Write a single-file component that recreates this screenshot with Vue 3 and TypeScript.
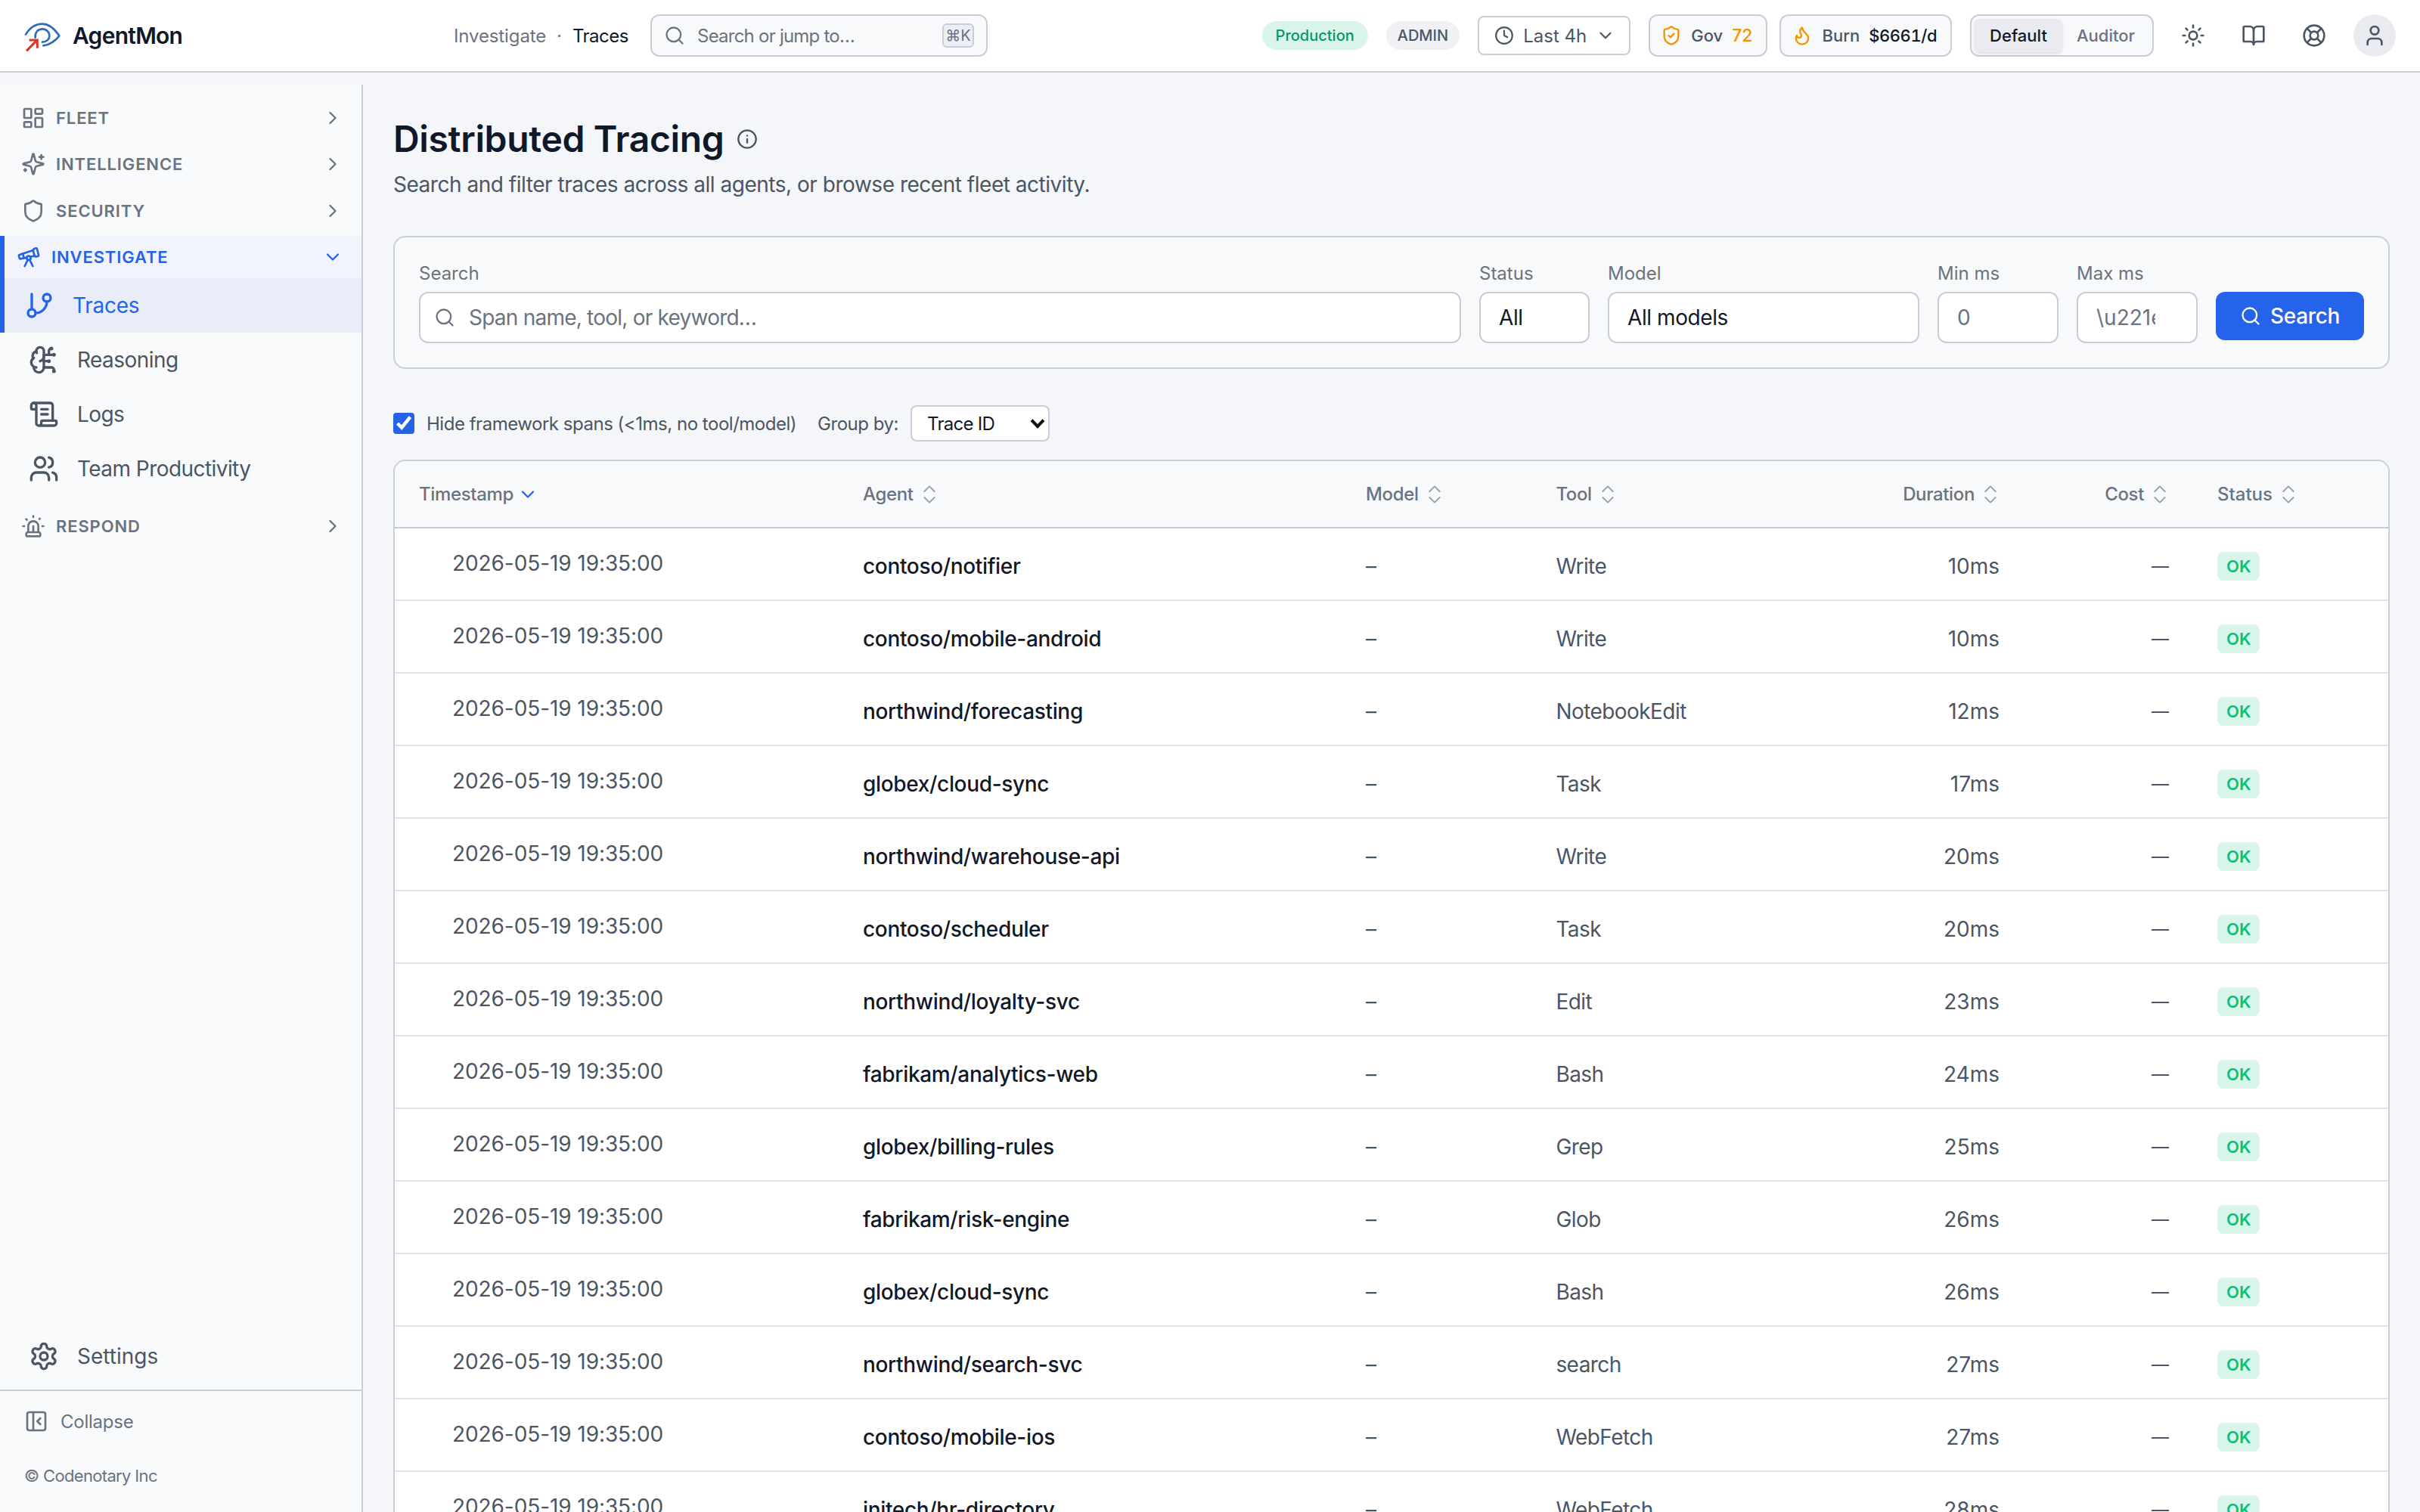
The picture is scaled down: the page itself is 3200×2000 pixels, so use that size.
<script setup lang="ts">
import { h } from 'vue'

// lucide-style icon bodies, keyed by name
const ICONS: Record<string, string> = {
  dashboard: '<rect x="3" y="3" width="7" height="9" rx="1"/><rect x="14" y="3" width="7" height="5" rx="1"/><rect x="14" y="12" width="7" height="9" rx="1"/><rect x="3" y="16" width="7" height="5" rx="1"/>',
  sparkles: '<path d="M9.937 15.5A2 2 0 0 0 8.5 14.063l-6.135-1.582a.5.5 0 0 1 0-.962L8.5 9.936A2 2 0 0 0 9.937 8.5l1.582-6.135a.5.5 0 0 1 .963 0L14.063 8.5A2 2 0 0 0 15.5 9.937l6.135 1.581a.5.5 0 0 1 0 .964L15.5 14.063a2 2 0 0 0-1.437 1.437l-1.582 6.135a.5.5 0 0 1-.963 0z"/><path d="M20 3v4"/><path d="M22 5h-4"/><path d="M4 17v2"/><path d="M5 18H3"/>',
  shield: '<path d="M20 13c0 5-3.5 7.5-7.66 8.95a1 1 0 0 1-.67-.01C7.5 20.5 4 18 4 13V6a1 1 0 0 1 1-1c2 0 4.5-1.2 6.24-2.72a1.17 1.17 0 0 1 1.52 0C14.51 3.81 17 5 19 5a1 1 0 0 1 1 1z"/>',
  shieldCheck: '<path d="M20 13c0 5-3.5 7.5-7.66 8.95a1 1 0 0 1-.67-.01C7.5 20.5 4 18 4 13V6a1 1 0 0 1 1-1c2 0 4.5-1.2 6.24-2.72a1.17 1.17 0 0 1 1.52 0C14.51 3.81 17 5 19 5a1 1 0 0 1 1 1z"/><path d="m9 12 2 2 4-4"/>',
  telescope: '<path d="m10.065 12.493-6.18 1.318a.934.934 0 0 1-1.108-.702l-.537-2.15a1.07 1.07 0 0 1 .691-1.265l13.504-4.44"/><path d="m13.56 11.747 4.332-.924"/><path d="m16 21-3.105-6.21"/><path d="M16.485 5.94a2 2 0 0 1 1.455-2.425l1.09-.272a1 1 0 0 1 1.212.727l1.515 6.06a1 1 0 0 1-.727 1.213l-1.09.272a2 2 0 0 1-2.425-1.455z"/><path d="m6.158 8.633 1.114 4.456"/><path d="m8 21 3.105-6.21"/><circle cx="12" cy="13" r="2"/>',
  branch: '<line x1="6" x2="6" y1="3" y2="15"/><circle cx="18" cy="6" r="3"/><circle cx="6" cy="18" r="3"/><path d="M18 9a9 9 0 0 1-9 9"/>',
  brain: '<path d="M12 5a3 3 0 1 0-5.997.125 4 4 0 0 0-2.526 5.77 4 4 0 0 0 .556 6.588A4 4 0 1 0 12 18Z"/><path d="M9 13a4.5 4.5 0 0 0 3-4"/><path d="M6.003 5.125A3 3 0 0 0 6.401 6.5"/><path d="M3.477 10.896a4 4 0 0 1 .585-.396"/><path d="M6 18a4 4 0 0 1-1.967-.516"/><path d="M12 13h4"/><path d="M12 18h6a2 2 0 0 1 2 2v1"/><path d="M12 8h8"/><path d="M16 8V5a2 2 0 0 1 2-2"/><circle cx="16" cy="13" r=".5"/><circle cx="18" cy="3" r=".5"/><circle cx="20" cy="21" r=".5"/><circle cx="20" cy="8" r=".5"/>',
  scroll: '<path d="M15 12h-5"/><path d="M15 8h-5"/><path d="M19 17V5a2 2 0 0 0-2-2H4"/><path d="M8 21h12a2 2 0 0 0 2-2v-1a1 1 0 0 0-1-1H11a1 1 0 0 0-1 1v1a2 2 0 1 1-4 0V5a2 2 0 1 0-4 0v2a1 1 0 0 0 1 1h3"/>',
  users: '<path d="M16 21v-2a4 4 0 0 0-4-4H6a4 4 0 0 0-4 4v2"/><circle cx="9" cy="7" r="4"/><path d="M22 21v-2a4 4 0 0 0-3-3.87"/><path d="M16 3.13a4 4 0 0 1 0 7.75"/>',
  siren: '<path d="M7 18v-6a5 5 0 1 1 10 0v6"/><path d="M5 21a1 1 0 0 0 1 1h12a1 1 0 0 0 1-1v-1a2 2 0 0 0-2-2H7a2 2 0 0 0-2 2z"/><path d="M21 12h1"/><path d="M18.5 4.5 18 5"/><path d="M2 12h1"/><path d="M12 2v1"/><path d="m4.929 4.929.707.707"/><path d="M12 12v6"/>',
  settings: '<path d="M12.22 2h-.44a2 2 0 0 0-2 2v.18a2 2 0 0 1-1 1.73l-.43.25a2 2 0 0 1-2 0l-.15-.08a2 2 0 0 0-2.73.73l-.22.38a2 2 0 0 0 .73 2.73l.15.1a2 2 0 0 1 1 1.72v.51a2 2 0 0 1-1 1.74l-.15.09a2 2 0 0 0-.73 2.73l.22.38a2 2 0 0 0 2.73.73l.15-.08a2 2 0 0 1 2 0l.43.25a2 2 0 0 1 1 1.73V20a2 2 0 0 0 2 2h.44a2 2 0 0 0 2-2v-.18a2 2 0 0 1 1-1.73l.43-.25a2 2 0 0 1 2 0l.15.08a2 2 0 0 0 2.73-.73l.22-.39a2 2 0 0 0-.73-2.73l-.15-.08a2 2 0 0 1-1-1.74v-.5a2 2 0 0 1 1-1.74l.15-.09a2 2 0 0 0 .73-2.73l-.22-.38a2 2 0 0 0-2.73-.73l-.15.08a2 2 0 0 1-2 0l-.43-.25a2 2 0 0 1-1-1.73V4a2 2 0 0 0-2-2z"/><circle cx="12" cy="12" r="3"/>',
  collapse: '<rect x="3" y="3" width="18" height="18" rx="2"/><path d="M9 3v18"/><path d="m16 15-3-3 3-3"/>',
  search: '<circle cx="11" cy="11" r="8"/><path d="m21 21-4.3-4.3"/>',
  info: '<circle cx="12" cy="12" r="10"/><path d="M12 16v-4"/><path d="M12 8h.01"/>',
  clock: '<circle cx="12" cy="12" r="10"/><polyline points="12 6 12 12 16 14"/>',
  flame: '<path d="M8.5 14.5A2.5 2.5 0 0 0 11 12c0-1.38-.5-2-1-3-1.072-2.143-.224-4.054 2-6 .5 2.5 2 4.9 4 6.5 2 1.6 3 3.5 3 5.5a7 7 0 1 1-14 0c0-1.153.433-2.294 1-3a2.5 2.5 0 0 0 2.5 2.5z"/>',
  sun: '<circle cx="12" cy="12" r="4"/><path d="M12 2v2"/><path d="M12 20v2"/><path d="m4.93 4.93 1.41 1.41"/><path d="m17.66 17.66 1.41 1.41"/><path d="M2 12h2"/><path d="M20 12h2"/><path d="m6.34 17.66-1.41 1.41"/><path d="m19.07 4.93-1.41 1.41"/>',
  book: '<path d="M12 7v14"/><path d="M3 18a1 1 0 0 1-1-1V4a1 1 0 0 1 1-1h5a4 4 0 0 1 4 4 4 4 0 0 1 4-4h5a1 1 0 0 1 1 1v13a1 1 0 0 1-1 1h-6a3 3 0 0 0-3 3 3 3 0 0 0-3-3z"/>',
  buoy: '<circle cx="12" cy="12" r="10"/><path d="m4.93 4.93 4.24 4.24"/><path d="m14.83 9.17 4.24-4.24"/><path d="m14.83 14.83 4.24 4.24"/><path d="m9.17 14.83-4.24 4.24"/><circle cx="12" cy="12" r="4"/>',
  user: '<path d="M19 21v-2a4 4 0 0 0-4-4H9a4 4 0 0 0-4 4v2"/><circle cx="12" cy="7" r="4"/>',
  right: '<path d="m9 18 6-6-6-6"/>',
  down: '<path d="m6 9 6 6 6-6"/>',
  sort: '<path d="m7 15 5 5 5-5"/><path d="m7 9 5-5 5 5"/>',
}

const Icon = (props: { name: string; size?: number }) =>
  h('svg', {
    width: props.size ?? 16,
    height: props.size ?? 16,
    viewBox: '0 0 24 24',
    fill: 'none',
    stroke: 'currentColor',
    'stroke-width': 2,
    'stroke-linecap': 'round',
    'stroke-linejoin': 'round',
    innerHTML: ICONS[props.name],
  })

const investigateItems = [
  { label: 'Reasoning', icon: 'brain' },
  { label: 'Logs', icon: 'scroll' },
  { label: 'Team Productivity', icon: 'users' },
]

const rows = [
  ['contoso/notifier', 'Write', '10ms'],
  ['contoso/mobile-android', 'Write', '10ms'],
  ['northwind/forecasting', 'NotebookEdit', '12ms'],
  ['globex/cloud-sync', 'Task', '17ms'],
  ['northwind/warehouse-api', 'Write', '20ms'],
  ['contoso/scheduler', 'Task', '20ms'],
  ['northwind/loyalty-svc', 'Edit', '23ms'],
  ['fabrikam/analytics-web', 'Bash', '24ms'],
  ['globex/billing-rules', 'Grep', '25ms'],
  ['fabrikam/risk-engine', 'Glob', '26ms'],
  ['globex/cloud-sync', 'Bash', '26ms'],
  ['northwind/search-svc', 'search', '27ms'],
  ['contoso/mobile-ios', 'WebFetch', '27ms'],
  ['initech/hr-directory', 'WebFetch', '28ms'],
]
</script>

<template>
  <div class="app">
    <header class="topbar">
      <div class="brand">
        <svg class="logo" viewBox="30 30 150 130" fill="none" stroke-linecap="round" stroke-linejoin="round">
          <path d="M42 80C60 50 85 38 108 38C135 38 158 60 175 85C160 105 140 120 112 124" stroke="#2f6db5" stroke-width="8" />
          <path d="M80 92C78 72 90 58 108 58C125 58 138 72 136 88C135 100 122 110 108 110" stroke="#2f6db5" stroke-width="8" />
          <path d="M45 145L86 103M56 102H88V134" stroke="#d9352f" stroke-width="9" stroke-linejoin="miter" stroke-linecap="butt" />
        </svg>
        <span class="brand-name">AgentMon</span>
      </div>
      <nav class="crumbs">
        <span>Investigate</span>
        <span class="crumb-dot">·</span>
        <span class="crumb-current">Traces</span>
      </nav>
      <div class="jump">
        <Icon name="search" :size="14" />
        <span class="jump-text">Search or jump to…</span>
        <kbd class="kbd">⌘K</kbd>
      </div>

      <div class="topbar-right">
        <span class="pill pill--env">Production</span>
        <span class="pill pill--role">ADMIN</span>
        <button class="range">
          <Icon name="clock" :size="14" />
          <span>Last 4h</span>
          <Icon name="down" :size="14" />
        </button>
        <div class="stat">
          <Icon class="stat-icon" name="shieldCheck" :size="14" />
          <span class="stat-label">Gov</span>
          <span class="stat-gov">72</span>
        </div>
        <div class="stat stat--burn">
          <Icon class="stat-icon" name="flame" :size="14" />
          <span class="stat-label">Burn</span>
          <span class="stat-burn">$6661/d</span>
        </div>
        <div class="segmented">
          <span class="segment segment--on">Default</span>
          <span class="segment segment--off">Auditor</span>
        </div>
        <div class="tools">
          <button class="tool"><Icon name="sun" /></button>
          <button class="tool"><Icon name="book" /></button>
          <button class="tool"><Icon name="buoy" /></button>
          <span class="avatar"><Icon name="user" /></span>
        </div>
      </div>
    </header>

    <div class="body">
      <aside class="sidebar">
        <nav class="nav">
          <div class="group"><Icon name="dashboard" /><span>FLEET</span><Icon class="group-caret" name="right" :size="14" /></div>
          <div class="group"><Icon name="sparkles" /><span>INTELLIGENCE</span><Icon class="group-caret" name="right" :size="14" /></div>
          <div class="group"><Icon name="shield" /><span>SECURITY</span><Icon class="group-caret" name="right" :size="14" /></div>
          <div class="section">
            <div class="group group--open"><Icon name="telescope" /><span>INVESTIGATE</span><Icon class="group-caret" name="down" :size="14" /></div>
            <a class="item item--active"><Icon name="branch" :size="20" /><span>Traces</span></a>
            <a v-for="item in investigateItems" :key="item.label" class="item">
              <Icon :name="item.icon" :size="20" /><span>{{ item.label }}</span>
            </a>
          </div>
          <div class="group group--respond"><Icon name="siren" /><span>RESPOND</span><Icon class="group-caret" name="right" :size="14" /></div>
        </nav>
        <div class="sidebar-foot">
          <a class="item item--settings"><Icon name="settings" :size="20" /><span>Settings</span></a>
          <div class="foot-meta">
            <div class="collapse"><Icon name="collapse" :size="16" /><span>Collapse</span></div>
            <div class="copyright">© Codenotary Inc</div>
          </div>
        </div>
      </aside>

      <main class="main">
        <div class="title-row">
          <h1>Distributed Tracing</h1>
          <Icon class="title-info" name="info" :size="14" />
        </div>
        <p class="subtitle">Search and filter traces across all agents, or browse recent fleet activity.</p>

        <section class="filters">
          <label class="field field--search">
            <span class="field-label">Search</span>
            <span class="search-wrap">
              <Icon class="search-icon" name="search" :size="14" />
              <input class="control control--search" placeholder="Span name, tool, or keyword…" />
            </span>
          </label>
          <label class="field field--status">
            <span class="field-label">Status</span>
            <select class="control"><option>All</option></select>
          </label>
          <label class="field field--model">
            <span class="field-label">Model</span>
            <select class="control"><option>All models</option></select>
          </label>
          <label class="field field--ms">
            <span class="field-label">Min ms</span>
            <input class="control control--ms" type="number" placeholder="0" />
          </label>
          <label class="field field--ms">
            <span class="field-label">Max ms</span>
            <input class="control control--ms" type="number" placeholder="\u221e" />
          </label>
          <button class="search-btn"><Icon name="search" :size="14" /><span>Search</span></button>
        </section>

        <div class="options">
          <label class="hide-spans">
            <input type="checkbox" checked />
            <span>Hide framework spans (&lt;1ms, no tool/model)</span>
          </label>
          <label class="group-by">
            <span>Group by:</span>
            <span class="select-wrap">
              <select><option>Trace ID</option></select>
              <svg class="select-arrow" width="10" height="7" viewBox="0 0 10 7" fill="none">
                <path d="M1 1.3 5 5.5 9 1.3" stroke="#111" stroke-width="2" />
              </svg>
            </span>
          </label>
        </div>

        <div class="table-wrap">
          <table>
            <colgroup>
              <col class="col-time" />
              <col class="col-agent" />
              <col class="col-model" />
              <col class="col-tool" />
              <col class="col-duration" />
              <col class="col-cost" />
              <col class="col-status" />
            </colgroup>
            <thead>
              <tr>
                <th><span class="th-inner">Timestamp<Icon class="sort-active" name="down" :size="14" /></span></th>
                <th><span class="th-inner">Agent<Icon class="sort" name="sort" /></span></th>
                <th><span class="th-inner">Model<Icon class="sort" name="sort" /></span></th>
                <th><span class="th-inner">Tool<Icon class="sort" name="sort" /></span></th>
                <th class="num"><span class="th-inner">Duration<Icon class="sort" name="sort" /></span></th>
                <th class="num"><span class="th-inner">Cost<Icon class="sort" name="sort" /></span></th>
                <th class="th-status"><span class="th-inner">Status<Icon class="sort" name="sort" /></span></th>
              </tr>
            </thead>
            <tbody>
              <tr v-for="(row, i) in rows" :key="i">
                <td class="cell-time">2026-05-19 19:35:00</td>
                <td class="cell-agent">{{ row[0] }}</td>
                <td>–</td>
                <td class="cell-tool">{{ row[1] }}</td>
                <td class="num">{{ row[2] }}</td>
                <td class="num cell-cost">—</td>
                <td><span class="badge">OK</span></td>
              </tr>
            </tbody>
          </table>
        </div>
      </main>
    </div>
  </div>
</template>

<style scoped>
.app {
  zoom: 2;
  width: 1600px;
  height: 1000px;
  overflow: hidden;
  display: flex;
  flex-direction: column;
  background: #f4f6fa;
  color: #111827;
  font-family: Inter, "Noto Sans", sans-serif;
}

button,
input,
select {
  font-family: inherit;
}

/* top bar */
.topbar {
  height: 48px;
  flex: none;
  display: flex;
  align-items: center;
  padding: 0 16px 0 15px;
  background: #fff;
  border-bottom: 1px solid #c9cdd9;
  box-sizing: border-box;
}

.brand {
  width: 285px;
  display: flex;
  align-items: center;
  gap: 8px;
}

.logo {
  width: 25px;
  height: 21.67px;
  margin-top: 4px;
}

.brand-name {
  font-size: 15px;
  font-weight: 600;
  letter-spacing: -0.025em;
}

.crumbs {
  display: flex;
  gap: 7px;
  font-size: 12px;
  letter-spacing: -0.005em;
  color: #6b7280;
  width: 130px;
}

.crumb-current {
  color: #111827;
  letter-spacing: -0.02em;
}

.jump {
  width: 223px;
  height: 28px;
  box-sizing: border-box;
  display: flex;
  align-items: center;
  gap: 8px;
  padding: 0 8px;
  background: #f8f9fb;
  border: 1px solid #c9cdd9;
  border-radius: 6px;
  color: #6b7280;
  font-size: 12px;
}

.jump-text {
  flex: 1;
  letter-spacing: -0.032em;
}

.kbd {
  width: 21px;
  height: 16px;
  box-sizing: border-box;
  display: flex;
  align-items: center;
  justify-content: center;
  background: #eceef3;
  border: 1px solid #c9cdd9;
  border-radius: 3px;
  font-family: inherit;
  font-size: 10px;
}

.topbar-right {
  margin-left: auto;
  display: flex;
  align-items: center;
  gap: 12px;
}

.pill {
  height: 19px;
  display: flex;
  align-items: center;
  border-radius: 10px;
  font-size: 10px;
  font-weight: 500;
}

.pill--env {
  padding: 0 9px;
  background: #d9f5ea;
  color: #059669;
}

.pill--role {
  padding: 0 7.5px;
  background: #f0f1f5;
  color: #4b5563;
}

.range {
  width: 101px;
  height: 26px;
  box-sizing: border-box;
  display: flex;
  align-items: center;
  padding: 0 9px 0 10px;
  gap: 6px;
  background: #fff;
  border: 1px solid #c9cdd9;
  border-radius: 4px;
  font-size: 12px;
  color: #4b5563;
}

.range span {
  flex: 1;
  text-align: left;
  white-space: nowrap;
}

.stat {
  height: 28px;
  box-sizing: border-box;
  display: flex;
  align-items: center;
  gap: 6px;
  padding: 0 9px 0 7px;
  background: #f8f9fb;
  border: 1px solid #c9cdd9;
  border-radius: 6px;
  font-size: 11px;
  font-weight: 500;
  margin-right: -4px;
}

.stat-icon {
  color: #f59300;
}

.stat-label {
  color: #4b5563;
}

.stat-gov {
  color: #f59300;
  font-size: 11.5px;
}

.stat-burn {
  color: #111827;
  letter-spacing: -0.02em;
  font-variant-numeric: tabular-nums;
}

.stat--burn {
  margin-right: 0;
}

.segmented {
  height: 28px;
  box-sizing: border-box;
  display: flex;
  padding: 2px;
  background: #f8f9fb;
  border: 1px solid #c9cdd9;
  border-radius: 6px;
  font-size: 11px;
  font-weight: 500;
  color: #6b7280;
}

.segment {
  display: flex;
  align-items: center;
  padding: 0 10px;
  border-radius: 4px;
}

.segment--on {
  background: #e9ebf0;
  color: #111827;
  box-shadow: 0 1px 2px rgba(17, 24, 39, 0.12);
}

.segment--off {
  padding: 0 9.5px;
}

.tools {
  display: flex;
  align-items: center;
  gap: 8px;
  margin-left: -2px;
}

.tool {
  width: 32px;
  height: 28px;
  padding: 0;
  display: flex;
  align-items: center;
  justify-content: center;
  background: none;
  border: none;
  color: #4b5563;
}

.avatar {
  width: 28px;
  height: 28px;
  margin-left: 2px;
  border-radius: 50%;
  display: flex;
  align-items: center;
  justify-content: center;
  background: #e9ebf0;
  color: #4b5563;
}

/* sidebar */
.body {
  flex: 1;
  min-height: 0;
  display: flex;
  padding-top: 8px;
}

.sidebar {
  width: 240px;
  flex: none;
  box-sizing: border-box;
  display: flex;
  flex-direction: column;
  background: #f9fafc;
  border-right: 1px solid #c9cdd9;
}

.nav {
  flex: 1;
  display: flex;
  flex-direction: column;
  gap: 2.67px;
  padding-top: 8px;
}

.group {
  height: 28px;
  flex: none;
  display: flex;
  align-items: center;
  gap: 7px;
  padding: 0 12px 0 14px;
  font-size: 11px;
  font-weight: 600;
  letter-spacing: 0.04em;
  color: #6b7280;
}

.group-caret {
  margin-left: auto;
}

.group--open {
  padding-left: 8px;
  border-left: 3px solid #2563eb;
  background: #f1f4fb;
  color: #2563eb;
}

.group--respond {
  margin-top: 3.5px;
}

.item {
  height: 36px;
  display: flex;
  align-items: center;
  gap: 12px;
  padding-left: 19px;
  font-size: 14px;
  letter-spacing: -0.02em;
  color: #4b5563;
}

.item--active {
  padding-left: 13px;
  border-left: 3px solid #2563eb;
  background: #e8edf8;
  color: #2563eb;
  letter-spacing: -0.01em;
}

.sidebar-foot {
  flex: none;
}

.item--settings {
  margin-bottom: 4px;
  letter-spacing: 0;
}

.foot-meta {
  height: 81px;
  box-sizing: border-box;
  border-top: 1px solid #c9cdd9;
}

.collapse {
  height: 40px;
  display: flex;
  align-items: center;
  gap: 8px;
  padding-left: 16px;
  font-size: 12px;
  letter-spacing: -0.01em;
  color: #6b7280;
}

.copyright {
  margin-top: 8px;
  padding-left: 16px;
  font-size: 11px;
  line-height: 16px;
  letter-spacing: -0.03em;
  color: #6b7280;
}

/* main */
.main {
  flex: 1;
  min-width: 0;
  padding: 20px 20px 0;
}

.title-row {
  display: flex;
  align-items: center;
  gap: 8px;
}

h1 {
  margin: 0;
  font-size: 24px;
  line-height: 32px;
  font-weight: 600;
  letter-spacing: -0.007em;
}

.title-info {
  color: #4b5563;
}

.subtitle {
  margin: 4px 0 0;
  font-size: 14px;
  line-height: 20px;
  letter-spacing: -0.017em;
  color: #4b5563;
}

.filters {
  margin-top: 24px;
  height: 88px;
  box-sizing: border-box;
  display: flex;
  gap: 12px;
  padding: 16px;
  background: #f8f9fb;
  border: 1px solid #c9cdd9;
  border-radius: 8px;
}

.field {
  display: flex;
  flex-direction: column;
  gap: 4px;
}

.field--search {
  flex: 1;
}

.field--status {
  width: 73px;
}

.field--model {
  width: 206px;
}

.field--ms {
  width: 80px;
}

.field-label {
  font-size: 12px;
  line-height: 16px;
  color: #6b7280;
}

.control {
  width: 100%;
  height: 34px;
  box-sizing: border-box;
  padding: 0 12px;
  background: #fff;
  border: 1px solid #c9cdd9;
  border-radius: 6px;
  font-size: 14px;
  letter-spacing: -0.015em;
  color: #111827;
  appearance: none;
  outline: none;
}

.control--ms {
  appearance: auto;
  letter-spacing: 0;
}

.control::placeholder {
  color: #6b7280;
  opacity: 1;
}

.search-wrap {
  position: relative;
  display: block;
}

.search-icon {
  position: absolute;
  left: 10px;
  top: 10px;
  color: #6b7280;
}

.control--search {
  padding-left: 32px;
  letter-spacing: -0.0275em;
}

.search-btn {
  margin-top: 20px;
  height: 32px;
  display: flex;
  align-items: center;
  gap: 6px;
  padding: 0 16px;
  background: #2563eb;
  border: none;
  border-radius: 6px;
  color: #fff;
  font-size: 14px;
  font-weight: 500;
  letter-spacing: -0.012em;
}

.options {
  margin-top: 24px;
  height: 24px;
  display: flex;
  align-items: center;
  gap: 14px;
  font-size: 12px;
  letter-spacing: -0.02em;
  color: #4b5563;
}

.hide-spans {
  display: flex;
  align-items: center;
  gap: 8px;
}

.hide-spans input {
  width: 14px;
  height: 14px;
  margin: 0;
  accent-color: #2563eb;
}

.group-by {
  display: flex;
  align-items: center;
  gap: 8px;
}

.select-wrap {
  position: relative;
  display: block;
  height: 24px;
}

.select-wrap select {
  display: block;
  width: 92px;
  height: 24px;
  box-sizing: border-box;
  padding: 0 0 0 10px;
  background: #fff;
  border: 1px solid #c9cdd9;
  border-radius: 4px;
  font-size: 12px;
  letter-spacing: -0.03em;
  color: #111827;
  appearance: none;
  outline: none;
}

.select-arrow {
  position: absolute;
  right: 3px;
  top: 8.5px;
  pointer-events: none;
}

.table-wrap {
  margin-top: 12px;
  background: #fff;
  border: 1px solid #c9cdd9;
  border-radius: 8px 8px 0 0;
  overflow: hidden;
}

table {
  width: 100%;
  table-layout: fixed;
  border-collapse: separate;
  border-spacing: 0;
  font-size: 14px;
}

.col-time { width: 293.5px; }
.col-agent { width: 332.5px; }
.col-model { width: 125.7px; }
.col-tool { width: 200px; }
.col-duration { width: 125.3px; }
.col-cost { width: 112px; }

th {
  height: 44.5px;
  box-sizing: border-box;
  padding: 0 16px;
  background: #f8f9fb;
  border-bottom: 1px solid #c9cdd9;
  font-size: 12px;
  font-weight: 500;
  letter-spacing: -0.015em;
  color: #6b7280;
  text-align: left;
}

.th-status {
  letter-spacing: 0;
}

.th-inner {
  display: inline-flex;
  align-items: center;
  gap: 2.5px;
}

.sort {
  color: #9ca3af;
  stroke-width: 1.5;
}

.sort-active {
  color: #2563eb;
}

th.num .sort {
  margin-right: -2px;
}

td {
  height: 48px;
  box-sizing: border-box;
  padding: 3px 16px 0;
  border-bottom: 1px solid #e3e7ed;
  color: #4b5563;
}

.cell-time {
  padding: 0 16px 1px 38px;
  letter-spacing: -0.003em;
}

.cell-agent {
  font-weight: 500;
  letter-spacing: -0.012em;
  color: #111827;
}

.cell-tool {
  letter-spacing: -0.02em;
}

.cell-cost {
  font-size: 11.5px;
}

.num {
  text-align: right;
}

.badge {
  display: inline-block;
  height: 19px;
  padding: 0 6px;
  border-radius: 4px;
  background: #d9f5ea;
  color: #05c27a;
  font-size: 11px;
  font-weight: 600;
  line-height: 19px;
  vertical-align: middle;
}
</style>
